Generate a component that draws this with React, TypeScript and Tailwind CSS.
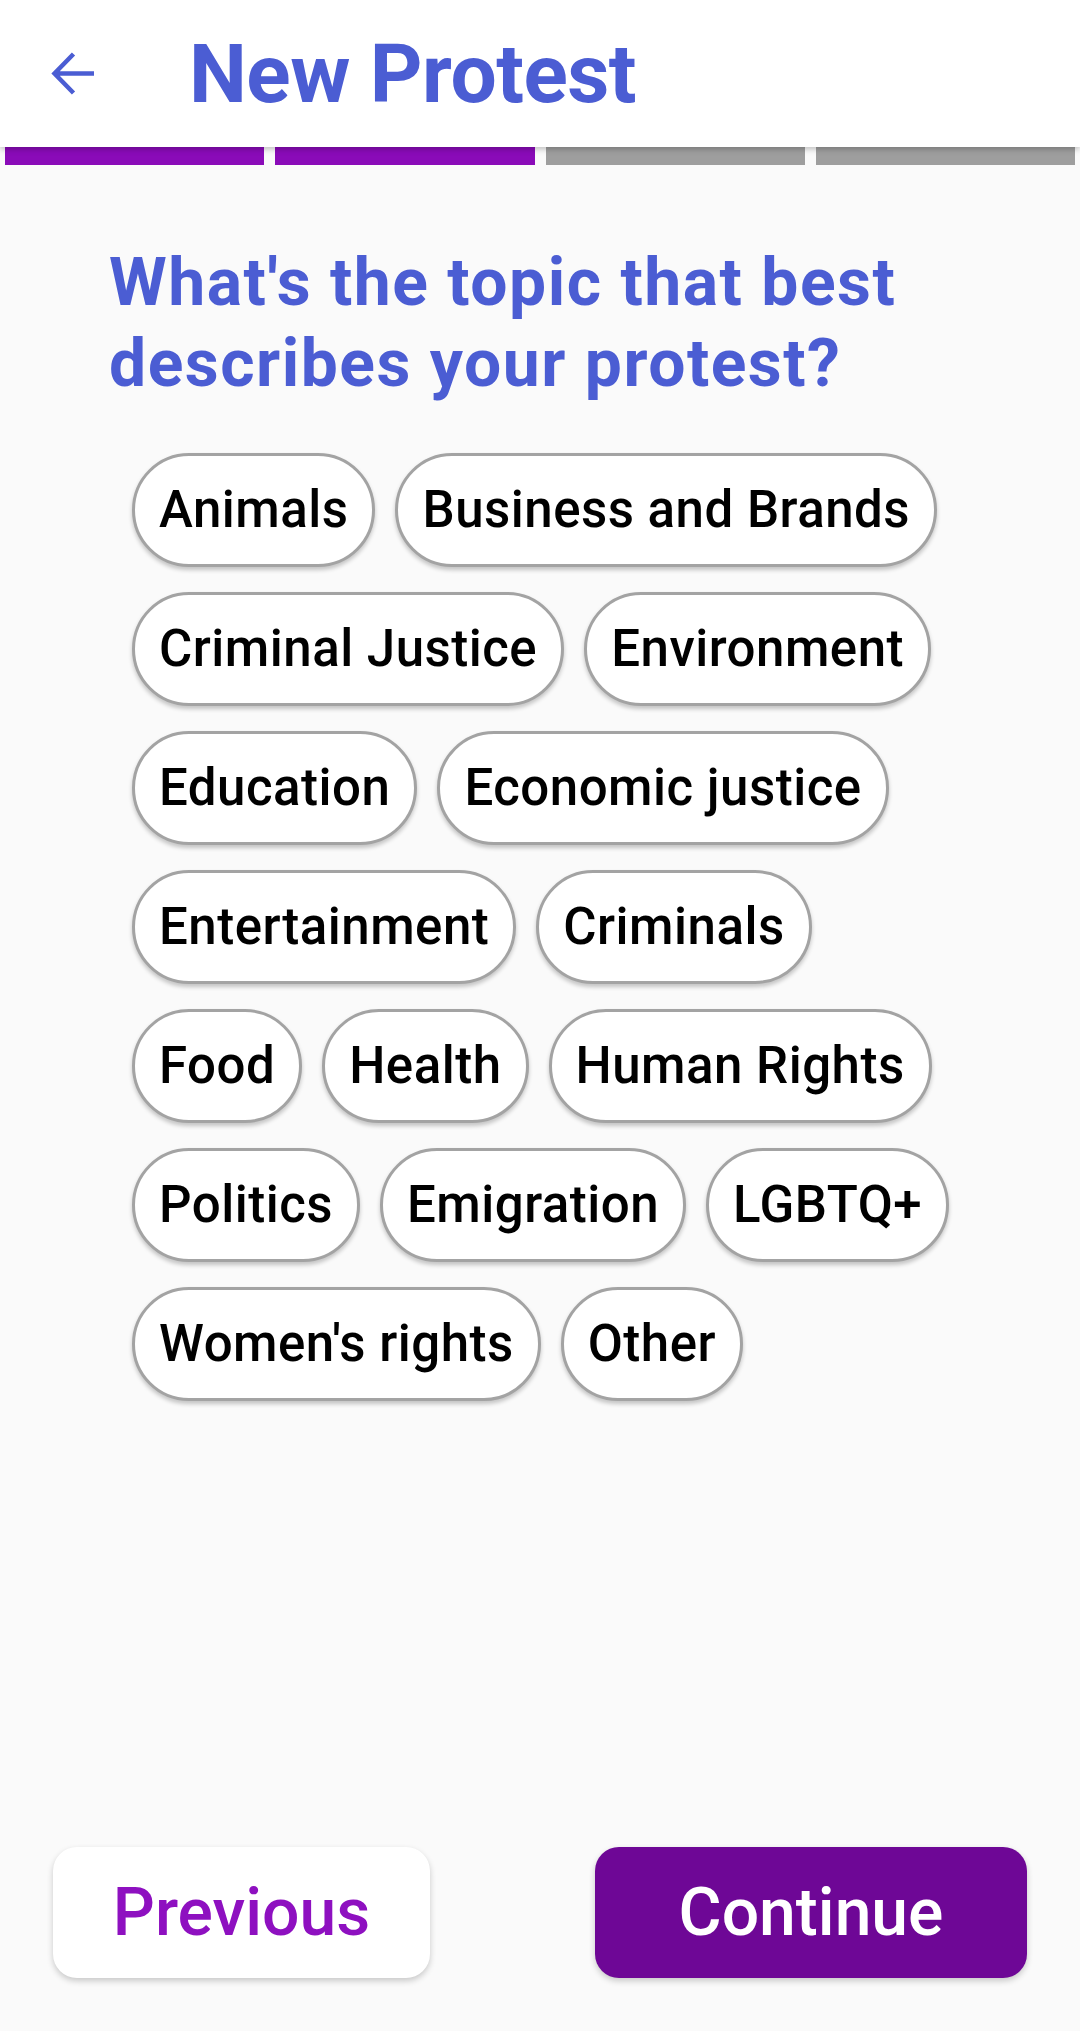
import React from "react";

const topics = [
  "Animals",
  "Business and Brands",
  "Criminal Justice",
  "Environment",
  "Education",
  "Economic justice",
  "Entertainment",
  "Criminals",
  "Food",
  "Health",
  "Human Rights",
  "Politics",
  "Emigration",
  "LGBTQ+",
  "Women's rights",
  "Other",
];

export default function App() {
  return (
    <div
      className="min-h-screen w-[1080px] bg-[#fafafa] flex flex-col"
      style={{ fontFamily: "Roboto, 'Noto Sans', sans-serif" }}
    >
      <header className="relative z-10 h-[147px] bg-white flex items-center shadow-[0_2px_6px_rgba(0,0,0,0.25)]">
        <div className="w-[189px] flex items-center pl-[51px]">
          <svg width="45" height="45" viewBox="0 0 45 45" fill="none">
            <path
              d="M43 22.5H4M22.5 3L3.5 22.5L22.5 42"
              stroke="#4b5dd3"
              strokeWidth="4.5"
              strokeLinecap="butt"
              strokeLinejoin="miter"
            />
          </svg>
        </div>
        <h1 className="text-[82px] leading-none font-bold text-[#4b5dd3] tracking-[-0.5px]">
          New Protest
        </h1>
      </header>

      <div className="flex gap-[11px] px-[5px] h-[18px]">
        <div className="flex-1 bg-[#8a0bb8]" />
        <div className="flex-1 bg-[#8a0bb8]" />
        <div className="flex-1 bg-[#9e9e9e]" />
        <div className="flex-1 bg-[#9e9e9e]" />
      </div>

      <h2 className="mt-[77px] ml-[109px] pr-[40px] text-[66px] leading-[81px] font-bold text-[#4b5dd3] tracking-[1.5px]">
        What's the topic that best describes your protest?
      </h2>

      <div className="mt-[49px] ml-[132px] w-[842px] flex flex-wrap gap-x-[20px] gap-y-[25px]">
        {topics.map((t) => (
          <div
            key={t}
            className="h-[114px] flex items-center px-[24px] rounded-full bg-white border-[3px] border-[#a3a3a3] shadow-[0_3px_4px_rgba(0,0,0,0.22)] text-[51px] tracking-[0.5px] font-medium text-black whitespace-nowrap"
          >
            {t}
          </div>
        ))}
      </div>

      <div className="mt-auto flex justify-between px-[53px] pb-[53px]">
        <button className="w-[377px] h-[131px] rounded-[24px] bg-white shadow-[0_3px_6px_rgba(0,0,0,0.2)] text-[66px] font-medium text-[#8e10c0]">
          Previous
        </button>
        <button className="w-[432px] h-[131px] rounded-[24px] bg-[#6e0796] shadow-[0_3px_6px_rgba(0,0,0,0.2)] text-[66px] font-medium text-white">
          Continue
        </button>
      </div>
    </div>
  );
}
